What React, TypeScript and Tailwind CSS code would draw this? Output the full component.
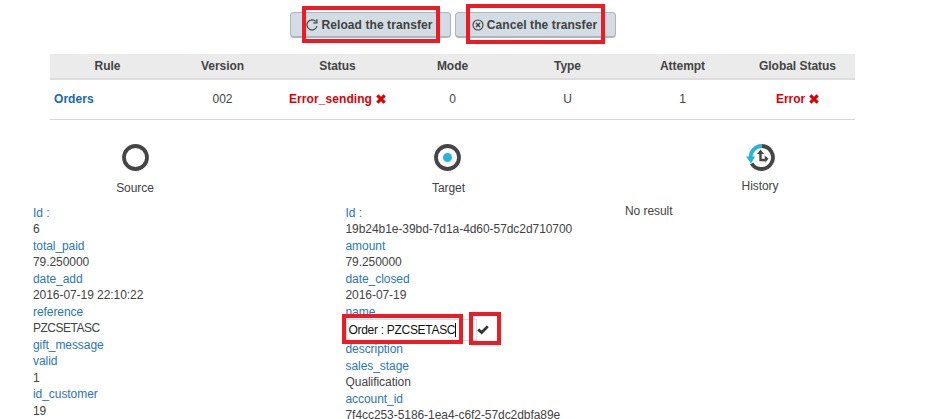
import type { ReactNode } from 'react';

function Field({ label, value, tight = false }: { label: string; value?: string; tight?: boolean }) {
  return (
    <>
      <dt className="h-[16.5px] whitespace-nowrap text-[#2a76b8]">{label}</dt>
      {value && (
        <dd className={tight ? 'h-[16.5px] tracking-[-0.5px] whitespace-nowrap' : 'h-[16.5px] whitespace-nowrap'}>{value}</dd>
      )}
    </>
  );
}

function Cross() {
  return (
    <svg className="ml-1 inline-block h-[10px] w-[10px] align-[-0.5px]" viewBox="0 0 10 10" aria-hidden="true">
      <path d="M2.5 0.3 5 2.8 7.5 0.3 9.8 2.4 7.2 5 9.8 7.6 7.5 9.7 5 7.2 2.5 9.7 0.2 7.6 2.8 5 0.2 2.4Z" fill="#dc0009" />
    </svg>
  );
}

function ActionButton({ icon, label, mark }: { icon: ReactNode; label: string; mark: ReactNode }) {
  return (
    <div className="relative mt-3 h-[26px] w-[161px]">
      <button className="flex h-full w-full items-center justify-center rounded-[4px] border border-b-2 border-[#acb6bc] bg-[#d3dce2] pr-[2px] text-[12px] font-bold whitespace-nowrap text-[#3e4144]">
        {icon}
        <span className="mt-[2px] ml-[3px] tracking-[0.09px]">{label}</span>
      </button>
      {mark}
    </div>
  );
}

const heads = ['Rule', 'Version', 'Status', 'Mode', 'Type', 'Attempt', 'Global Status'];

export default function App() {
  return (
    <div className="h-[419px] w-[927px] overflow-hidden bg-white font-['Liberation_Sans',Arial,sans-serif] text-[12px] leading-[16.5px] tracking-[-0.06px] text-[#434343]">
      <header className="flex h-[54px] gap-[4px] pl-[290px]">
        <ActionButton
          label="Reload the transfer"
          icon={
            <svg className="h-[12px] w-[12px]" viewBox="0 0 12 12" fill="none" stroke="#3e4144" strokeWidth="1.2">
              <path d="M11 7.2A5.1 5.1 0 1 1 9.8 2.4" />
              <path d="M10.9 0.2V3.8H7.3" />
            </svg>
          }
          mark={<span className="absolute -top-[6px] left-[12px] h-[37px] w-[138px] border-4 border-[#ed1c24]" />}
        />
        <ActionButton
          label="Cancel the transfer"
          icon={
            <svg className="h-[12px] w-[12px]" viewBox="0 0 12 12" fill="none" stroke="#3e4144" strokeWidth="1.1">
              <circle cx="6" cy="6" r="5" />
              <path d="M4 4 8 8M8 4 4 8" strokeWidth="1.4" />
            </svg>
          }
          mark={<span className="absolute -top-[8px] left-[11px] h-[40px] w-[139px] border-4 border-[#ed1c24]" />}
        />
      </header>

      <table className="ml-[50px] w-[805px] table-fixed border-collapse text-center">
        <thead>
          <tr className="h-[25px] border-b-2 border-[#dddddd] bg-[#ebebeb]">
            {heads.map((h) => (
              <th key={h} className="p-0 font-bold tracking-[-0.03px]">{h}</th>
            ))}
          </tr>
        </thead>
        <tbody>
          <tr className="h-[40px] border-b border-[#d8d8d8]">
            <td className="p-0 pl-1 text-left font-bold tracking-[0.05px] text-[#1468ae]">Orders</td>
            <td className="p-0">002</td>
            <td className="p-0 font-bold tracking-[0.08px] whitespace-nowrap text-[#dc0009]">Error_sending<Cross /></td>
            <td className="p-0">0</td>
            <td className="p-0">U</td>
            <td className="p-0">1</td>
            <td className="p-0 font-bold whitespace-nowrap text-[#dc0009]">Error<Cross /></td>
          </tr>
        </tbody>
      </table>

      <main className="flex pt-[24px]">
        <section className="w-[345.5px] shrink-0 pl-[33px]">
          <div className="flex h-[61px] w-[204px] flex-col items-center">
            <svg className="h-[27px] w-[27px] shrink-0" viewBox="0 0 27 27">
              <circle cx="13.5" cy="13.5" r="11.5" fill="none" stroke="#454545" strokeWidth="3.8" />
            </svg>
            <h2 className="mt-[9px]">Source</h2>
          </div>
          <dl>
            <Field label="Id :" value="6" />
            <Field label="total_paid" value="79.250000" />
            <Field label="date_add" value="2016-07-19 22:10:22" />
            <Field label="reference" value="PZCSETASC" tight />
            <Field label="gift_message" />
            <Field label="valid" value="1" />
            <Field label="id_customer" value="19" />
          </dl>
        </section>

        <section className="w-[279.5px] shrink-0">
          <div className="flex h-[61px] w-[204px] flex-col items-center">
            <svg className="h-[27px] w-[27px] shrink-0" viewBox="0 0 27 27">
              <circle cx="13.5" cy="13.5" r="11.5" fill="none" stroke="#454545" strokeWidth="3.8" />
              <circle cx="13.5" cy="13.5" r="4.5" fill="#25b4dc" />
            </svg>
            <h2 className="mt-[9px] ml-[2px]">Target</h2>
          </div>
          <dl>
            <Field label="Id :" value="19b24b1e-39bd-7d1a-4d60-57dc2d710700" />
            <Field label="amount" value="79.250000" />
            <Field label="date_closed" value="2016-07-19" />
            <Field label="name" />
            <dd className="relative -mt-px flex h-[22px] items-center">
              <span className="flex h-[22px] w-[131px] items-center border border-[#dddddd] bg-white pl-[2px] tracking-[-0.3px] whitespace-nowrap text-[#111111]">
                Order : PZCSETASC<span className="h-[14px] w-px bg-black" />
              </span>
              <svg className="h-[10px] w-[12px]" viewBox="0 0 12 10">
                <path d="M0.3 5.5 2.3 3.4 4.6 5.5 9.8 0.4 11.7 2.2 4.7 9.5Z" fill="#333333" />
              </svg>
              <span className="absolute -top-[5px] -left-[3.5px] h-[30px] w-[121px] border-4 border-[#ed1c24]" />
              <span className="absolute -top-[7px] left-[123.5px] h-[33px] w-[32px] border-4 border-[#ed1c24]" />
            </dd>
            <Field label="description" />
            <Field label="sales_stage" value="Qualification" />
            <Field label="account_id" value="7f4cc253-5186-1ea4-c6f2-57dc2dbfa89e" />
          </dl>
        </section>

        <section className="w-[270px] shrink-0">
          <div className="flex h-[59px] flex-col items-center">
            <svg className="h-[27px] w-[29px] shrink-0" viewBox="0 0 29 27" fill="none">
              <path d="M15.5 2A11.5 11.5 0 1 1 5.6 19.5" stroke="#454545" strokeWidth="3.8" />
              <path d="M15.5 2A11.3 11.3 0 0 0 4.6 14" stroke="#25b4dc" strokeWidth="3.8" />
              <path d="M0 12.5H9.2L5 19.5Z" fill="#25b4dc" />
              <path d="M14.5 8V16H19.5" stroke="#454545" strokeWidth="2.4" />
              <path d="M11 10 14.5 5.5 18 10ZM18.5 11.5 22.5 14.5 19.5 18.5Z" fill="#454545" />
            </svg>
            <h2 className="mt-[7px]">History</h2>
          </div>
          <p>No result</p>
        </section>
      </main>
    </div>
  );
}
